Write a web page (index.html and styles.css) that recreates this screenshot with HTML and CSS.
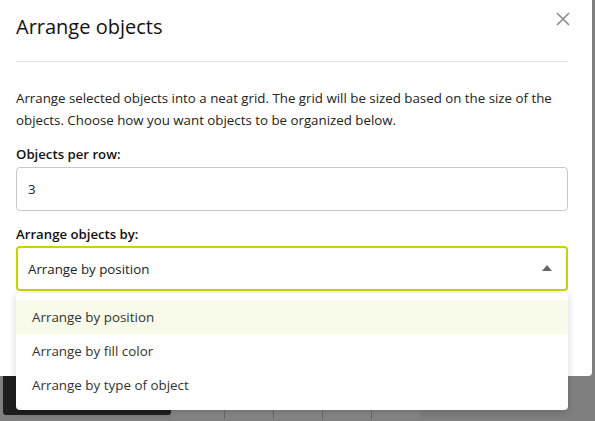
FILE: index.html
```html
<!DOCTYPE html>
<html>
<head>
<meta charset="utf-8">
<link rel="stylesheet" href="styles.css">
</head>
<body>
<div class="modal">
  <div class="header">
    <h1 class="title">Arrange objects</h1>
    <svg class="close" width="14" height="14" viewBox="0 0 14 14"><path d="M1 1L13 13M13 1L1 13" stroke="#8a8a8a" stroke-width="1.6" fill="none"/></svg>
  </div>
  <div class="body">
    <p class="desc">Arrange selected objects into a neat grid. The grid will be sized based on the size of the objects. Choose how you want objects to be organized below.</p>
    <label class="label">Objects per row:</label>
    <div class="input">3</div>
    <label class="label second">Arrange objects by:</label>
    <div class="select-wrap">
      <div class="select">
        <span>Arrange by position</span>
        <svg class="caret" width="10" height="6" viewBox="0 0 10 6"><path d="M0 6L5 0L10 6Z" fill="#666"/></svg>
      </div>
      <div class="menu">
        <div class="item active">Arrange by position</div>
        <div class="item">Arrange by fill color</div>
        <div class="item">Arrange by type of object</div>
      </div>
    </div>
  </div>
</div>
<div class="toolbar">
  <div class="dark"></div>
  <div class="grey">
    <span class="seg s1"></span><span class="seg"></span><span class="seg"></span><span class="seg"></span><span class="seg last"></span>
  </div>
</div>
</body>
</html>
```
FILE: styles.css
```css
html, body {
  margin: 0;
  padding: 0;
}
body {
  background: #7f7f7f;
  width: 595px;
  height: 421px;
  overflow: hidden;
  font-family: "Open Sans", "Noto Sans", sans-serif;
  color: #222;
}
.modal {
  width: 592px;
  height: 376px;
  background: #fff;
  border-bottom-right-radius: 4px;
  box-sizing: border-box;
  padding: 0 24px 0 16px;
}
.header {
  display: flex;
  justify-content: space-between;
  align-items: flex-start;
  height: 62px;
  border-bottom: 1px solid #e3e3e3;
  box-sizing: border-box;
}
.title {
  margin: 0;
  padding-top: 13px;
  font-size: 20px;
  font-weight: 400;
  color: #111;
}
.close {
  margin-top: 12px;
  margin-right: -2px;
}
.body {
  padding-top: 25px;
}
.desc {
  margin: 0;
  font-size: 13.3px;
  line-height: 22px;
  color: #222;
}
.label {
  display: block;
  margin-top: 14px;
  font-size: 13.2px;
  font-weight: 600;
  color: #111;
  line-height: 18px;
}
.label.second {
  margin-top: 14px;
}
.input {
  margin-top: 4px;
  height: 44px;
  border: 1px solid #c9c9c9;
  border-radius: 4px;
  box-sizing: border-box;
  padding: 0 11px;
  display: flex;
  align-items: center;
  font-size: 13.3px;
  color: #222;
}
.select-wrap {
  position: relative;
  margin-top: 3px;
}
.select {
  height: 45px;
  border: 2px solid #c6d400;
  border-radius: 4px;
  box-sizing: border-box;
  padding: 0 14px 0 10px;
  display: flex;
  align-items: center;
  justify-content: space-between;
  font-size: 13.3px;
  color: #222;
}
.caret {
  margin-top: -1px;
}
.menu {
  position: absolute;
  left: 0;
  right: 0;
  top: 47px;
  background: #fff;
  border-radius: 4px;
  box-shadow: 0 2px 8px rgba(0,0,0,0.18);
  padding: 7px 0 8px;
  z-index: 2;
}
.item {
  height: 34px;
  display: flex;
  align-items: center;
  padding-left: 16px;
  padding-bottom: 1px;
  box-sizing: border-box;
  font-size: 13.4px;
  color: #333;
}
.item.active {
  background: #f9fbea;
}
.toolbar {
  display: flex;
  align-items: flex-start;
  padding-left: 3px;
}
.dark {
  width: 168px;
  height: 39px;
  background: #1f1f1f;
  border-radius: 0 0 3px 3px;
}
.grey {
  display: flex;
  width: 249px;
  height: 43px;
  background: #868686;
  border-radius: 0 0 3px 0;
}
.seg {
  width: 49px;
  height: 100%;
  border-right: 1px solid #6a6a6a;
  box-sizing: border-box;
}
.seg.s1 {
  width: 54px;
}
.seg.last {
  border-right: none;
  width: 48px;
}
```
